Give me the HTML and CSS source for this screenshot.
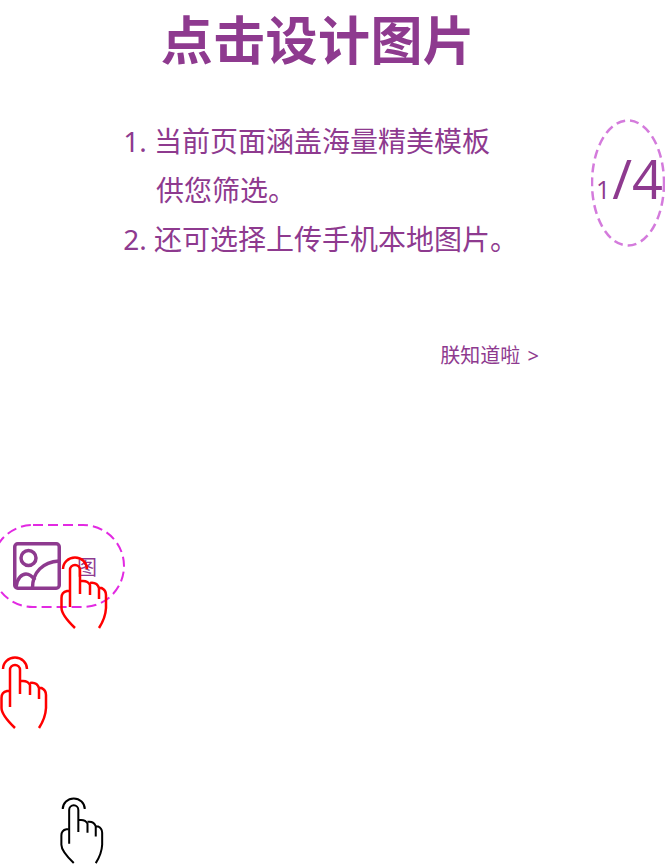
FILE: index.html
```html
<!DOCTYPE html>
<html lang="zh-CN">
<head>
    <meta charset="UTF-8">
    <meta name="viewport" content="width=device-width, initial-scale=1.0">
    <title>点击设计图片</title>
    <link rel="stylesheet" href="styles.css">
</head>
<body>
    <svg class="hand-defs" width="0" height="0">
        <symbol id="hand" viewBox="0 0 48 74">
            <path d="M3 13A12 11.500 0 0 1 27 13"/>
            <path d="M10 51V14A5 5 0 0 1 20 14V38"/>
            <path d="M20 25H23Q28 25 30 29V39"/>
            <path d="M30 27Q37 26 39 32V43"/>
            <path d="M39 32H41.500Q46 34 46 39V52Q45.500 62 39 72"/>
            <path d="M9.500 35H7Q1.500 36 1.500 42V52Q1.500 59 15 72"/>
        </symbol>
    </svg>

    <h1 class="title">点击设计图片</h1>

    <ol class="steps">
        <li>当前页面涵盖海量精美模板<br><span class="indent">供您筛选。</span></li>
        <li>还可选择上传手机本地图片。</li>
    </ol>

    <div class="pager">
        <svg class="pager-ring" viewBox="0 0 74 128" width="74" height="128">
            <ellipse cx="37" cy="64" rx="36" ry="62.500"/>
        </svg>
        <span class="pager-now">1</span>/4
    </div>

    <div class="got-it">朕知道啦 &gt;</div>

    <div class="picture-btn">
        <svg class="picture-ring" viewBox="0 0 134 84" width="134" height="84">
            <rect x="1" y="1" width="132" height="82" rx="41"/>
        </svg>
        <svg class="picture-icon" viewBox="0 0 48 48" width="48" height="48">
            <rect x="1.750" y="1.750" width="44.500" height="44.500" rx="3"/>
            <circle cx="15.500" cy="16" r="7.500"/>
            <path d="M3 45C4 36 9 32 13 32C16 32 19 34 22 38"/>
            <path d="M19.500 46C19.500 30 30 20 46 19"/>
        </svg>
        <span class="picture-label">图</span>
    </div>

    <svg class="hand hand-a"><use href="#hand"/></svg>
    <svg class="hand hand-b"><use href="#hand"/></svg>
    <svg class="hand hand-c"><use href="#hand"/></svg>
</body>
</html>
```

FILE: styles.css
```css
html {
    overflow: hidden;
}
body {
    position: relative;
    height: 864px;
    margin: 0;
    overflow: hidden;
    font-family: "Noto Sans", "Noto Sans CJK SC", sans-serif;
    color: #8e3a8f;
    background: #fff;
}
.title {
    width: 636px;
    margin: 0;
    font-family: "Noto Sans CJK SC", sans-serif;
    font-size: 52px;
    font-weight: 700;
    line-height: 76px;
    letter-spacing: 0.400px;
    text-align: center;
}
.steps {
    width: 400px;
    margin: 41px 0 0;
    padding: 0 0 0 154px;
    font-size: 28px;
    line-height: 49px;
}
.indent {
    padding-left: 2px;
}
.got-it {
    margin-top: 77px;
    padding-right: 133px;
    font-size: 20px;
    line-height: 30px;
    text-align: right;
    word-spacing: 2px;
}
.picture-btn {
    position: relative;
    display: flex;
    align-items: center;
    box-sizing: border-box;
    width: 134px;
    height: 84px;
    margin: 153px 0 0 -9px;
    padding-left: 22px;
}
.picture-ring {
    position: absolute;
    left: 0;
    top: 0;
    fill: none;
    stroke: #e22ae2;
    stroke-width: 2;
    stroke-dasharray: 10 5;
}
.picture-icon {
    flex: none;
    fill: none;
    stroke: #8e3a8f;
    stroke-width: 3.500;
}
.picture-label {
    margin: 4px 0 0 16px;
    font-size: 20px;
    line-height: 24px;
}

/* over the page */
.pager {
    position: absolute;
    left: 591px;
    top: 119px;
    box-sizing: border-box;
    width: 74px;
    height: 128px;
    padding: 24px 0 0 5px;
    font-family: "Open Sans", sans-serif;
    font-size: 54px;
    line-height: 70px;
    white-space: nowrap;
}
.pager-ring {
    position: absolute;
    left: 0;
    top: 0;
    fill: none;
    stroke: #d47bdc;
    stroke-width: 2.500;
    stroke-dasharray: 9 5;
}
.pager-now {
    margin-right: 2px;
    font-size: 25px;
}
.hand-defs {
    position: absolute;
}
.hand {
    position: absolute;
    width: 48px;
    height: 74px;
    fill: none;
    stroke: #f00;
    stroke-width: 2.500;
}
.hand-a {
    left: 59.500px;
    top: 556px;
}
.hand-b {
    left: 0;
    top: 656px;
}
.hand-c {
    left: 59.500px;
    top: 796px;
    width: 44px;
    height: 70px;
    stroke: #000;
    stroke-width: 2.200;
}
```
